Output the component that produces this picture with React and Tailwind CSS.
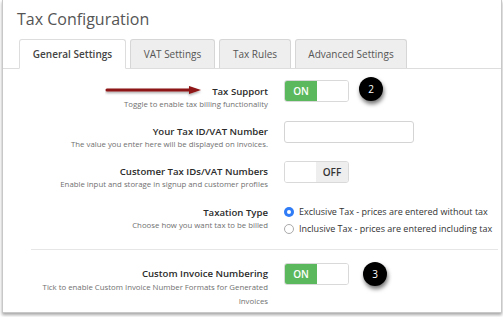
import React from "react";

const Toggle = ({ on }) => (
  <div className="flex h-[22px] w-[65px] overflow-hidden rounded-[3px] border border-[#d9d9d9] bg-white text-[10px] font-semibold">
    {on ? (
      <>
        <div className="flex w-[32px] items-center justify-center bg-[#5cb85c] text-white">ON</div>
        <div className="flex-1 bg-white" />
      </>
    ) : (
      <>
        <div className="flex-1 bg-white" />
        <div className="flex w-[32px] items-center justify-center bg-[#eeeeee] text-[#333]">OFF</div>
      </>
    )}
  </div>
);

const Badge = ({ n, className }) => (
  <div
    className={`flex h-[24px] w-[24px] items-center justify-center rounded-full bg-black text-[10px] text-white shadow-[1px_3px_4px_rgba(0,0,0,0.55)] ${className}`}
  >
    {n}
  </div>
);

const Label = ({ title, children, className = "" }) => (
  <div className={`w-[265px] shrink-0 text-right ${className}`}>
    <div className="text-[9.6px] leading-[13px] font-semibold text-[#2b2b2b]">{title}</div>
    <div className="text-[7.8px] leading-[13px] text-[#707070]">{children}</div>
  </div>
);

const Radio = ({ checked, children }) => (
  <div className="flex h-[17px] items-center gap-[5px] whitespace-nowrap text-[9px] text-[#333]">
    {checked ? (
      <span className="flex h-[10px] w-[10px] items-center justify-center rounded-full bg-[#2f7cf6]">
        <span className="h-[4px] w-[4px] rounded-full bg-white" />
      </span>
    ) : (
      <span className="h-[10px] w-[10px] rounded-full border border-[#aaa] bg-white" />
    )}
    <span>{children}</span>
  </div>
);

export default function App() {
  return (
    <div className="relative h-[317px] w-[503px] overflow-hidden bg-white font-['Open_Sans',sans-serif]">
      <div className="ml-[2px] h-[313px] w-[500px] border-x border-b border-[#c8c8c8] shadow-[0_2px_3px_rgba(0,0,0,0.35)]">
        <div className="px-[14px] pt-[9px] text-[16px] leading-[21px] text-[#555]">Tax Configuration</div>

        <div className="mt-[9px] flex items-end border-b border-[#dddddd] pl-[16px] pr-[3px]">
          <div className="-mb-px flex h-[30px] w-[107px] items-center justify-center rounded-t-[3px] border border-b-white border-[#dddddd] bg-white text-[10px] font-semibold text-[#444]">
            General Settings
          </div>
          <div className="ml-[4px] flex h-[29px] w-[85px] items-center justify-center rounded-t-[3px] border border-b-0 border-[#d6d6d6] bg-[#eeeeee] text-[10px] text-[#555]">
            VAT Settings
          </div>
          <div className="ml-[4px] flex h-[29px] w-[72px] items-center justify-center rounded-t-[3px] border border-b-0 border-[#d6d6d6] bg-[#eeeeee] text-[10px] text-[#555]">
            Tax Rules
          </div>
          <div className="ml-[4px] flex h-[29px] w-[112px] items-center justify-center rounded-t-[3px] border border-b-0 border-[#d6d6d6] bg-[#eeeeee] text-[10px] text-[#555]">
            Advanced Settings
          </div>
        </div>

        <div className="pt-[11px]">
          <div className="flex h-[40px] items-start gap-[16px]">
            <Label title="Tax Support" className="pt-[5px]">Toggle to enable tax billing functionality</Label>
            <div className="flex items-start">
              <Toggle on />
              <Badge n="2" className="ml-[10px] -mt-[3px]" />
            </div>
          </div>

          <div className="flex h-[40px] items-start gap-[16px]">
            <Label title="Your Tax ID/VAT Number" className="pt-[5px]">
              The value you enter here will be displayed on invoices.
            </Label>
            <div className="mt-[1px] h-[22px] w-[130px] rounded-[3px] border border-[#d4d4d4] bg-white" />
          </div>

          <div className="flex h-[40px] items-start gap-[16px]">
            <Label title="Customer Tax IDs/VAT Numbers" className="pt-[5px]">
              Enable input and storage in signup and customer profiles
            </Label>
            <div className="mt-[1px]">
              <Toggle />
            </div>
          </div>

          <div className="flex h-[49px] items-start gap-[16px]">
            <Label title="Taxation Type" className="pt-[6px]">Choose how you want tax to be billed</Label>
            <div className="flex flex-col pt-[3px]">
              <Radio checked>Exclusive Tax - prices are entered without tax</Radio>
              <Radio>Inclusive Tax - prices are entered including tax</Radio>
            </div>
          </div>

          <div className="ml-[28px] mr-[3px] border-t border-[#e6e6e6]" />

          <div className="flex items-start gap-[16px] pt-[13px]">
            <Label title="Custom Invoice Numbering" className="pt-[4px] [&>div:last-child]:leading-[14px]">
              Tick to enable Custom Invoice Number Formats for Generated
              <br />
              Invoices
            </Label>
            <div className="flex items-start">
              <Toggle on />
              <Badge n="3" className="ml-[14px] -mt-[1px]" />
            </div>
          </div>
        </div>
      </div>

      <svg className="absolute left-[105px] top-[84px]" width="100" height="14" viewBox="0 0 100 14">
        <defs>
          <filter id="s" x="-10%" y="-50%" width="120%" height="200%">
            <feDropShadow dx="0" dy="1.5" stdDeviation="1" floodColor="#000" floodOpacity="0.35" />
          </filter>
        </defs>
        <g filter="url(#s)">
          <line x1="2" y1="6" x2="86" y2="6" stroke="#8e1212" strokeWidth="3" strokeLinecap="round" />
          <polygon points="84,2 96,6 84,10" fill="#8e1212" />
        </g>
      </svg>
    </div>
  );
}
